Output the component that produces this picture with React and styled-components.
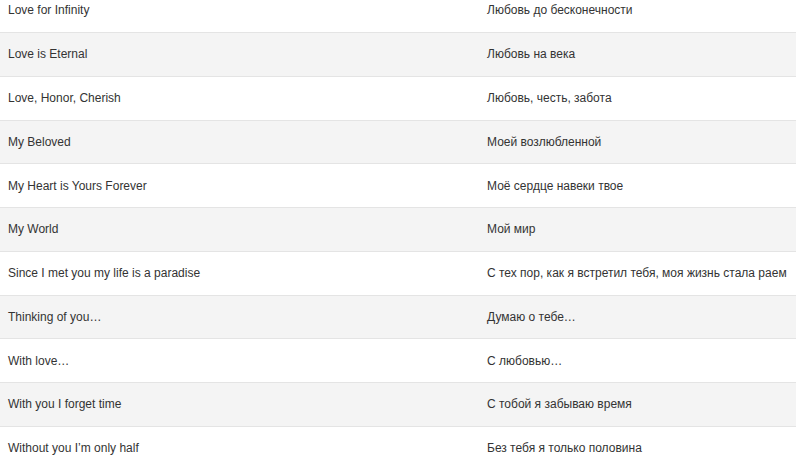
import React from "react";
import styled, { createGlobalStyle } from "styled-components";

const rows = [
  ["Love for Infinity", "Любовь до бесконечности"],
  ["Love is Eternal", "Любовь на века"],
  ["Love, Honor, Cherish", "Любовь, честь, забота"],
  ["My Beloved", "Моей возлюбленной"],
  ["My Heart is Yours Forever", "Моё сердце навеки твое"],
  ["My World", "Мой мир"],
  ["Since I met you my life is a paradise", "С тех пор, как я встретил тебя, моя жизнь стала раем"],
  ["Thinking of you…", "Думаю о тебе…"],
  ["With love…", "С любовью…"],
  ["With you I forget time", "С тобой я забываю время"],
  ["Without you I’m only half", "Без тебя я только половина"],
];

const GlobalStyle = createGlobalStyle`
  html, body {
    margin: 0;
    padding: 0;
    background: #fff;
    overflow: hidden;
  }
  body {
    font-family: "Liberation Sans", Arial, sans-serif;
    font-size: 12px;
    color: #333;
  }
`;

const Table = styled.div`
  width: 796px;
  margin-top: -11.8px;
`;

const Row = styled.div`
  display: grid;
  grid-template-columns: 479px 1fr;
  height: 43.78px;
  box-sizing: border-box;
  border-top: ${({ first }) => (first ? "none" : "1px solid #e4e4e4")};
  background: ${({ striped }) => (striped ? "#f4f4f4" : "#fff")};
  align-items: center;
`;

const Cell = styled.div`
  padding: 0 8px;
  white-space: nowrap;
  line-height: 18px;
`;

export default function App() {
  return (
    <>
      <GlobalStyle />
      <Table>
        {rows.map(([en, ru], i) => (
          <Row key={i} first={i === 0} striped={i % 2 === 1}>
            <Cell>{en}</Cell>
            <Cell>{ru}</Cell>
          </Row>
        ))}
      </Table>
    </>
  );
}
